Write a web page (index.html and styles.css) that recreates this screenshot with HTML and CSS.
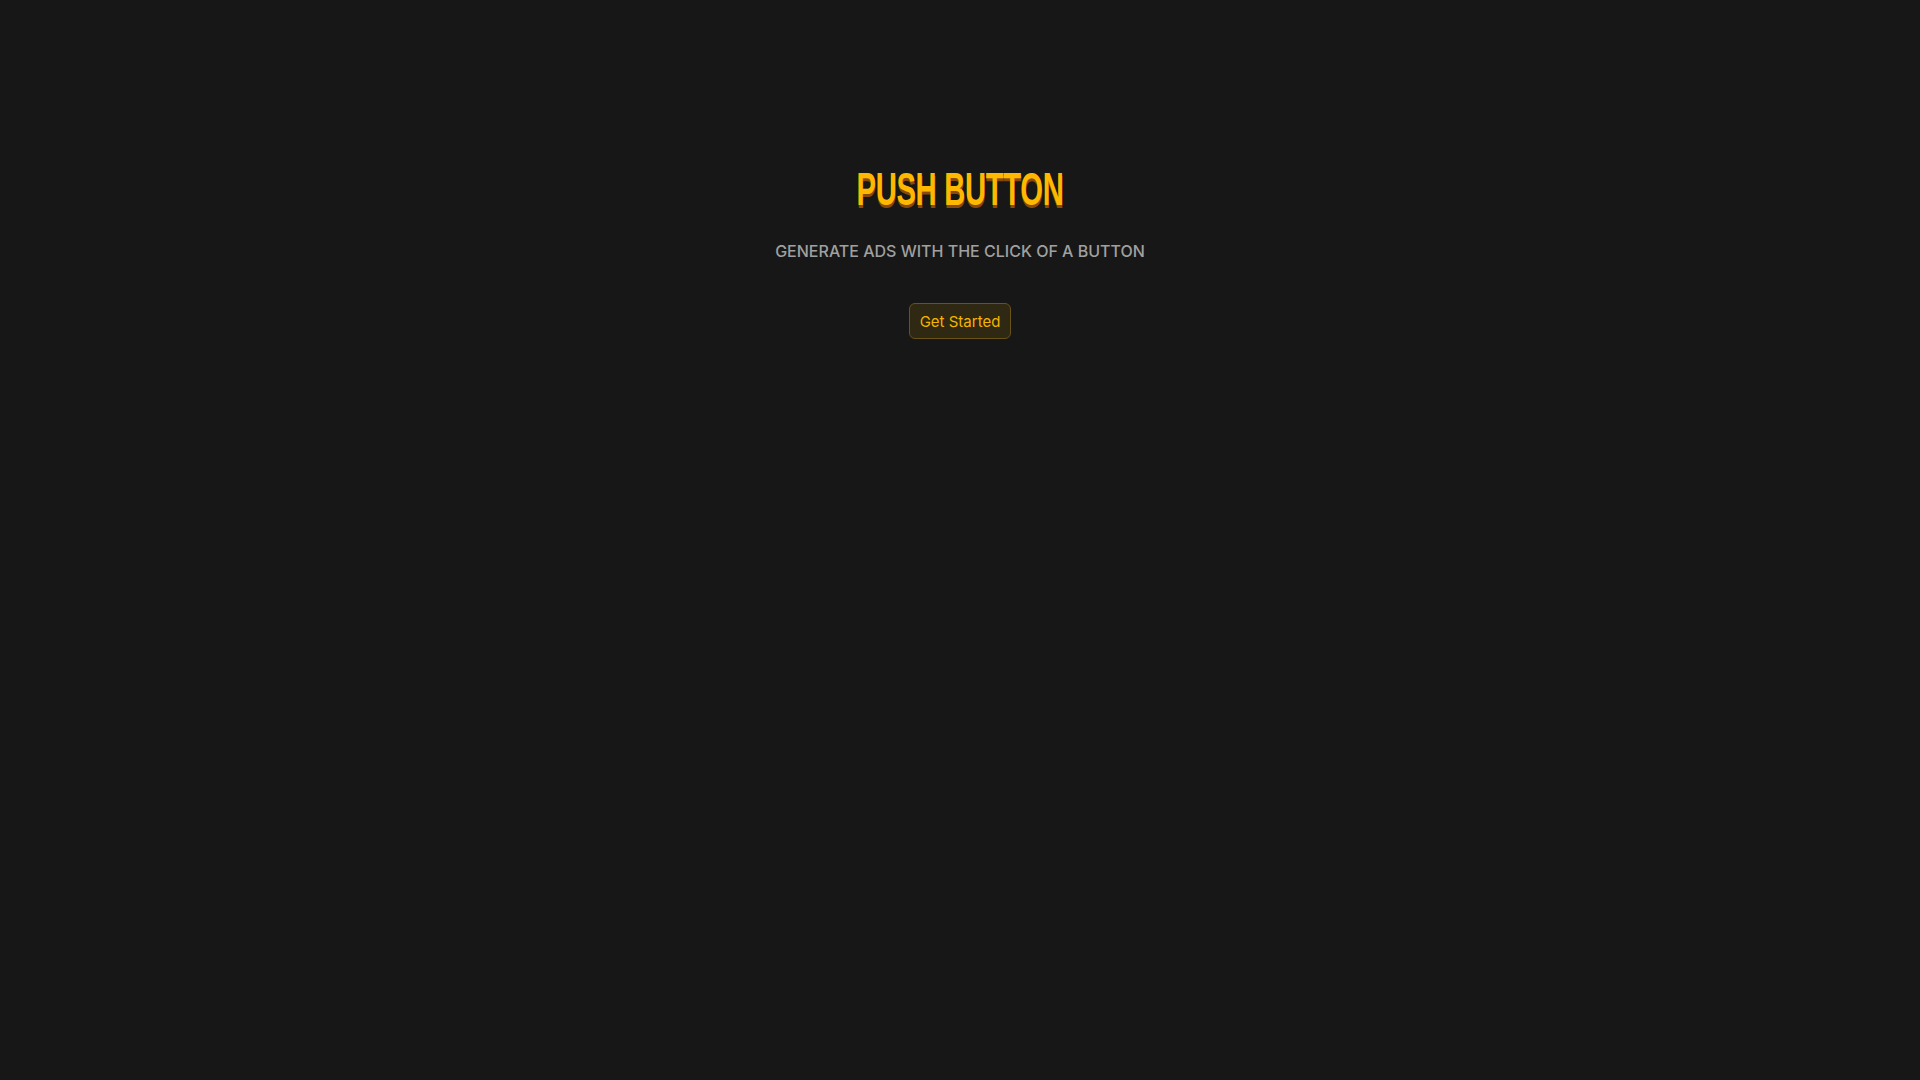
FILE: index.html
```html
<!DOCTYPE html>
<html lang="en">
<head>
<meta charset="utf-8">
<title>Push Button</title>
<link rel="stylesheet" href="styles.css">
</head>
<body>
<main class="hero">
  <h1 class="title"><span class="title-text">PUSH BUTTON</span></h1>
  <p class="subtitle">GENERATE ADS WITH THE CLICK OF A BUTTON</p>
  <button class="cta" type="button">Get Started</button>
</main>
</body>
</html>
```
FILE: styles.css
```css
html, body {
  margin: 0;
  padding: 0;
  background: #171717;
  height: 100%;
}
body {
  font-family: Inter, "Noto Sans", sans-serif;
}
.hero {
  display: flex;
  flex-direction: column;
  align-items: center;
  padding-top: 162px;
}
.title {
  margin: 0;
  height: 54px;
  line-height: 54px;
  font-family: "Liberation Sans", Arial, sans-serif;
  font-weight: 700;
  font-size: 46px;
  color: #ffb800;
  text-shadow: 0.5px 2.5px 0 #8a4a0e;
}
.title-text {
  display: inline-block;
  transform: scaleX(0.635);
  letter-spacing: -0.5px;
}
.subtitle {
  margin: 25px 0 0;
  font-size: 16px;
  font-weight: 500;
  color: #a0a0a0;
  letter-spacing: 0;
  line-height: 20px;
}
.cta {
  margin-top: 42px;
  width: 102px;
  height: 36px;
  padding: 0;
  font-family: Inter, "Noto Sans", sans-serif;
  font-size: 15px;
  font-weight: 400;
  color: #f5b400;
  background: #2f2813;
  border: 1px solid #6a5316;
  border-radius: 6px;
  cursor: pointer;
}
```
